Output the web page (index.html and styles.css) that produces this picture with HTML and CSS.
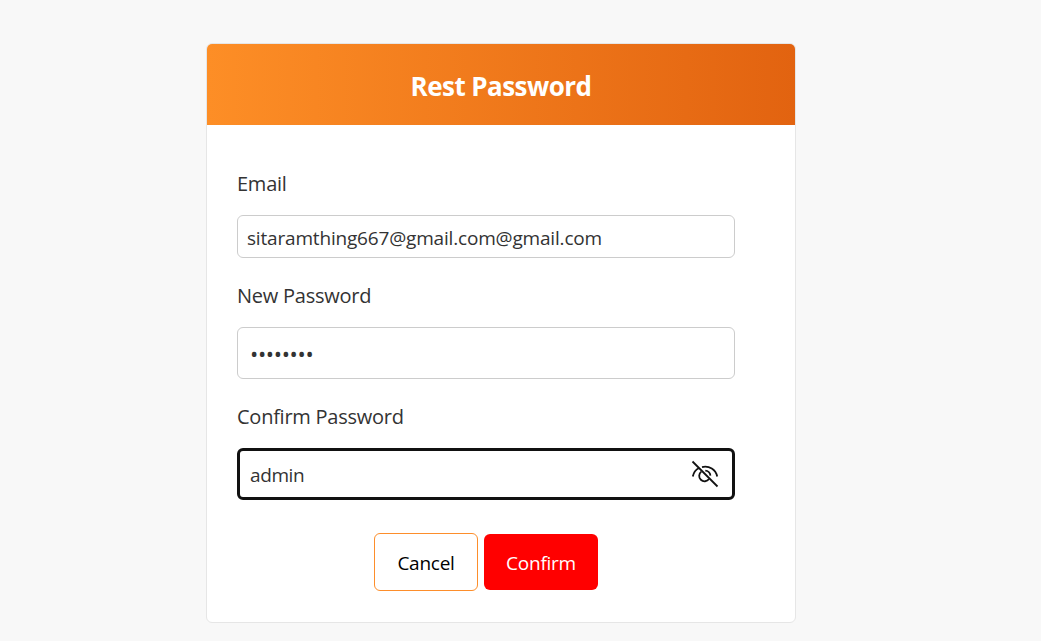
FILE: index.html
```html
<!DOCTYPE html>
<html lang="en">
<head>
<meta charset="utf-8">
<title>Rest Password</title>
<link rel="stylesheet" href="styles.css">
</head>
<body>
<main class="card">
  <header class="card-header"><h1 class="title">Rest Password</h1></header>
  <form class="form">
    <label class="label label-email" for="email">Email</label>
    <input class="input input-email" id="email" type="text" value="sitaramthing667@gmail.com@gmail.com">
    <label class="label label-new" for="new">New Password</label>
    <input class="input input-new" id="new" type="password" value="password">
    <label class="label label-confirm" for="confirm">Confirm Password</label>
    <div class="input input-confirm">
      <input class="bare" id="confirm" type="text" value="admin">
      <svg class="eye" viewBox="0 0 28 28" fill="none" stroke="#111" stroke-width="1.8">
        <path d="M1.5 1.5 26.5 26.5"/>
        <path d="M1.8 16.5C2.6 12.6 4.9 9.5 8.1 8M11 7.1C18.3 5.4 24.7 9.7 26.2 16.5"/>
        <path d="M10.3 11.6A5.4 5.4 0 1 0 18 19M14.3 10.6A5.4 5.4 0 0 1 19.4 15.6"/>
      </svg>
    </div>
    <div class="actions">
      <button class="btn cancel" type="button">Cancel</button>
      <button class="btn confirm" type="button">Confirm</button>
    </div>
  </form>
</main>
</body>
</html>
```
FILE: styles.css
```css
* { box-sizing: border-box; }
body {
  margin: 0;
  height: 641px;
  overflow: hidden;
  padding: 43px 0 0 206px;
  background: #f8f8f8;
  font-family: "Segoe UI", "Open Sans", "Noto Sans", sans-serif;
  color: #333;
}
.card {
  width: 590px;
  height: 580px;
  border: 1px solid #e6e6e6;
  border-radius: 6px;
  background: #fff;
  overflow: hidden;
}
.card-header {
  height: 81px;
  display: flex;
  align-items: center;
  justify-content: center;
  background: linear-gradient(to right, #fd8e26, #e26310);
}
.title {
  margin: 0;
  padding-top: 2px;
  font-size: 26px;
  line-height: 34px;
  letter-spacing: -0.55px;
  font-weight: 700;
  color: #fff;
}
.form {
  display: flex;
  flex-direction: column;
  padding: 45px 60px 0 30px;
}
.label { font-size: 20px; line-height: 28px; height: 28px; letter-spacing: -0.25px; }
.label-email { margin-bottom: 17px; }
.label-new { margin: 24px 0 17px; }
.label-confirm { margin: 24px 0 17px; }
.input {
  width: 498px;
  border: 1px solid #ccc;
  border-radius: 6px;
  background: #fff;
  color: #333;
  font: inherit;
  font-size: 19px;
  letter-spacing: -0.18px;
  outline: 0;
}
.input-email { height: 43px; padding: 2px 9px 0; }
.input-new { height: 52px; padding: 0 12px; font-size: 22px; letter-spacing: -0.35px; }
.input-confirm {
  height: 52px;
  display: flex;
  align-items: center;
  padding: 0 13px 0 10px;
  border: 3px solid #111;
}
.bare {
  flex: 1;
  border: 0;
  padding: 2px 0 0;
  font: inherit;
  letter-spacing: -0.4px;
  color: inherit;
  outline: 0;
}
.eye { width: 28px; height: 28px; }
.actions {
  display: flex;
  align-items: center;
  gap: 6px;
  padding: 33px 0 0 137px;
}
.btn {
  padding: 2px 0 0;
  border: 0;
  border-radius: 6px;
  font: inherit;
  font-size: 19px;
  letter-spacing: -0.25px;
}
.cancel { width: 104px; height: 58px; border: 1px solid #fd8e2b; background: #fff; color: #000; }
.confirm { width: 114px; height: 56px; background: #f00; color: #fff; }
```
